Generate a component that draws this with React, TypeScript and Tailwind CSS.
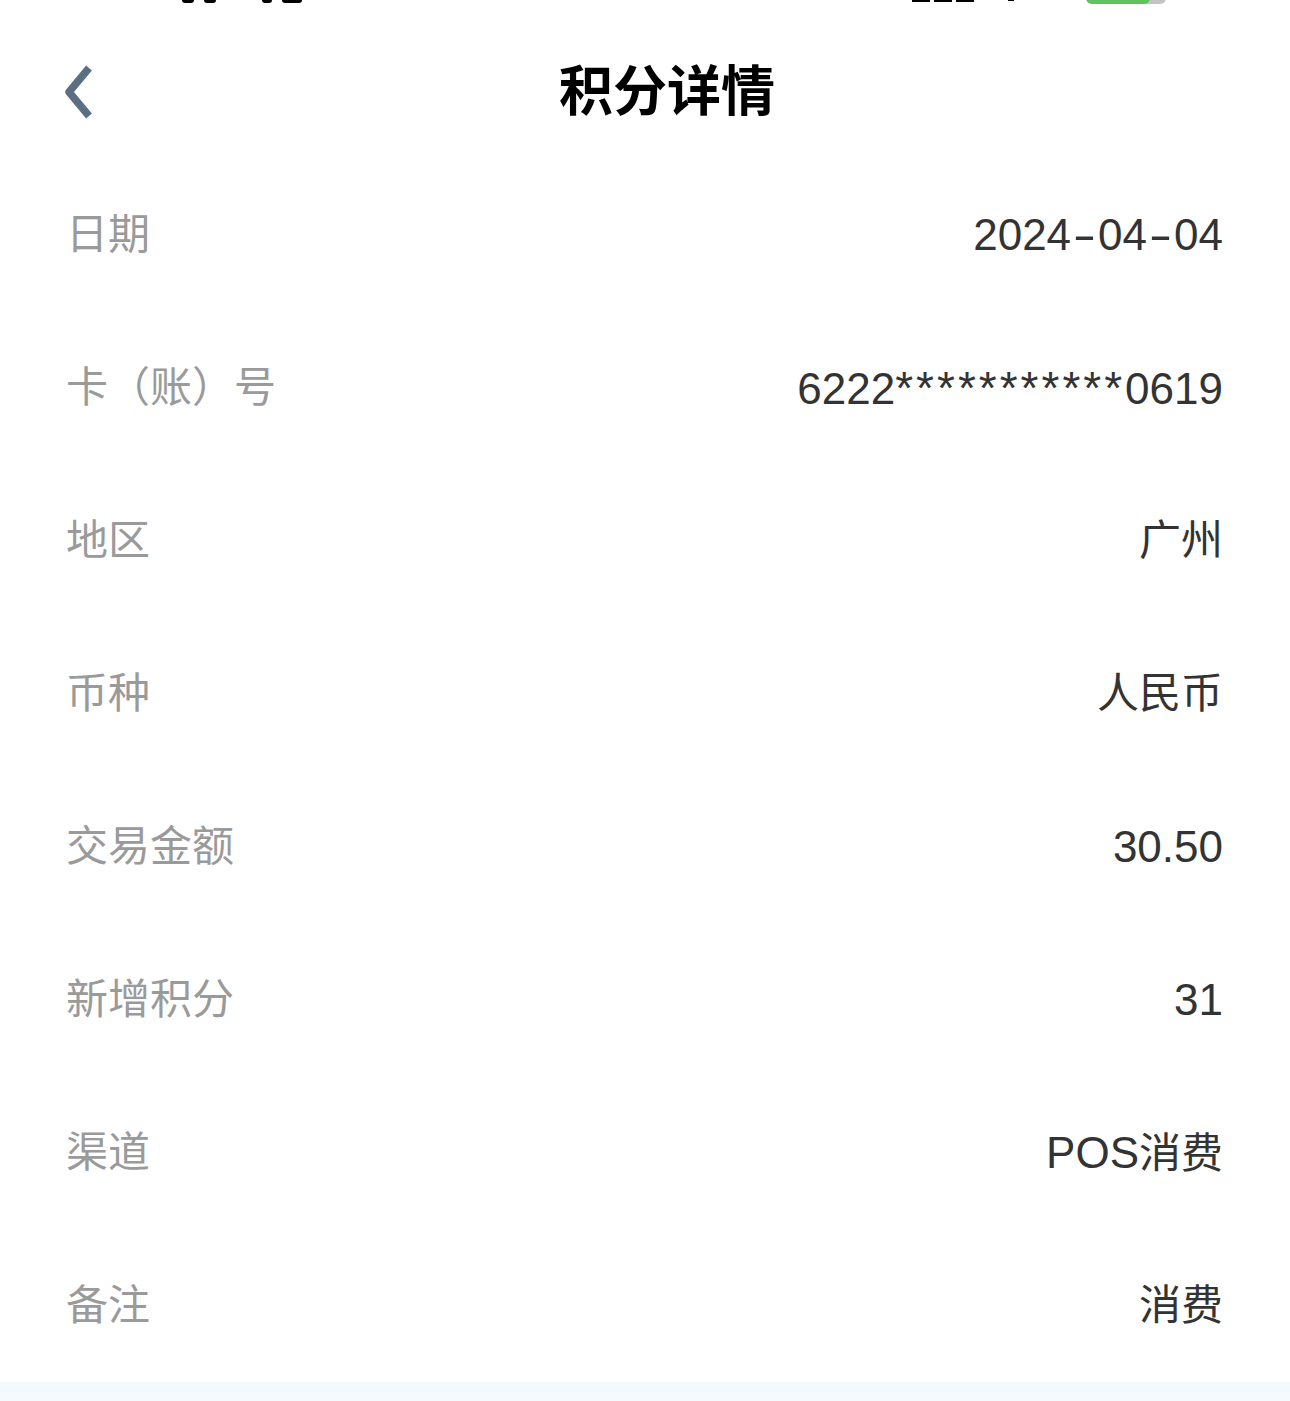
import React from "react";

const rows: [string, string][] = [
  ["日期", "2024-04-04"],
  ["卡（账）号", "6222***********0619"],
  ["地区", "广州"],
  ["币种", "人民币"],
  ["交易金额", "30.50"],
  ["新增积分", "31"],
  ["渠道", "POS消费"],
  ["备注", "消费"],
];

function Value({ text }: { text: string }) {
  const parts = text.match(/[\u4e00-\u9fff]+|\*+|-|[^\u4e00-\u9fff*-]+/g) || [];
  return (
    <span className="text-[44px] text-[#333333] leading-none flex items-baseline">
      {parts.map((p, i) => {
        if (/[\u4e00-\u9fff]/.test(p))
          return (
            <span key={i} className="text-[42px]">
              {p}
            </span>
          );
        if (p.startsWith("*"))
          return (
            <span key={i} className="text-[46px] tracking-[3px]">
              {p}
            </span>
          );
        if (p === "-")
          return (
            <span key={i} className="inline-block w-[27px] text-center scale-x-[1.6]">
              {p}
            </span>
          );
        return <span key={i}>{p}</span>;
      })}
    </span>
  );
}

export default function App() {
  return (
    <div
      className="w-[1290px] h-[1401px] bg-white flex flex-col overflow-hidden"
      style={{ fontFamily: '"Liberation Sans", "Noto Sans CJK SC", sans-serif' }}
    >
      {/* cut-off status bar remnants */}
      <div className="relative h-0">
        <div className="absolute left-[182px] top-[-3px] w-[120px] h-[6px] flex gap-[10px]">
          <div className="w-[12px] h-[6px] rounded-full bg-black" />
          <div className="w-[12px] h-[6px] rounded-full bg-black" />
          <div className="w-[10px] h-[6px] rounded-full bg-black ml-[36px]" />
          <div className="w-[20px] h-[6px] rounded-full bg-black" />
        </div>
        <div className="absolute left-[912px] top-[-3px] w-[120px] h-[6px] flex gap-[4px]">
          <div className="w-[18px] h-[5px] bg-black" />
          <div className="w-[18px] h-[5px] bg-black" />
          <div className="w-[18px] h-[5px] bg-black" />
          <div className="w-[6px] h-[4px] bg-black ml-[30px]" />
        </div>
        <div className="absolute left-[1086px] top-[-8px] w-[80px] h-[12px] rounded-[6px] bg-[#c4c4c4] overflow-hidden">
          <div className="w-[64px] h-full bg-[#5dc460] rounded-[6px]" />
        </div>
      </div>

      <div className="h-[158px] shrink-0 flex items-center justify-center relative pt-[26px] pl-[44px]">
        <svg
          className="absolute left-[58px] top-[60px]"
          width="40"
          height="62"
          viewBox="0 0 40 62"
          fill="none"
        >
          <path
            d="M31 8 L11 32 L31 56"
            stroke="#5c6f82"
            strokeWidth="7.5"
            strokeLinecap="butt"
            strokeLinejoin="round"
          />
        </svg>
        <h1 className="text-[54px] font-bold text-black leading-none">积分详情</h1>
      </div>

      <div className="flex flex-col">
        {rows.map(([k, v]) => (
          <div
            key={k}
            className="h-[153px] flex items-center justify-between pl-[66px] pr-[67px]"
          >
            <span className="text-[42px] text-[#9a9a9a] leading-none">{k}</span>
            <Value text={v} />
          </div>
        ))}
      </div>
      <div className="h-[19px] bg-[#f5fafe] shrink-0" />
    </div>
  );
}
